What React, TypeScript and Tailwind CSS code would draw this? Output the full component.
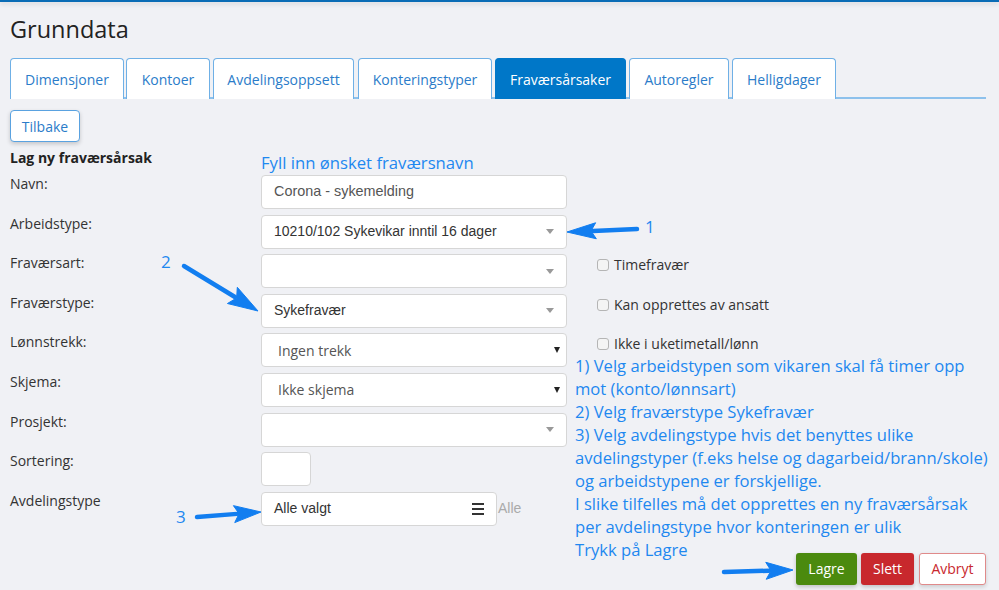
import React from "react";

const BLUE_NOTE = "#1e88f0";

type Pt = [number, number];

// Callout arrow: thick shaft with a filled triangular head
function Arrow({ from, to, head = 28, width = 17 }: { from: Pt; to: Pt; head?: number; width?: number }) {
  const dx = to[0] - from[0];
  const dy = to[1] - from[1];
  const len = Math.hypot(dx, dy);
  const ux = dx / len;
  const uy = dy / len;
  const bx = to[0] - ux * head;
  const by = to[1] - uy * head;
  const nx = -uy * (width / 2);
  const ny = ux * (width / 2);
  return (
    <g fill="#127ef0" stroke="#127ef0">
      <line x1={from[0]} y1={from[1]} x2={bx + ux * 3} y2={by + uy * 3} strokeWidth={4.5} strokeLinecap="round" />
      <polygon
        strokeWidth={1}
        strokeLinejoin="round"
        points={`${to[0]},${to[1]} ${bx + nx},${by + ny} ${bx + ux * 5},${by + uy * 5} ${bx - nx},${by - ny}`}
      />
    </g>
  );
}

const tabs = [
  { name: "Dimensjoner", w: "w-[114px]", ml: "ml-0" },
  { name: "Kontoer", w: "w-[84px]", ml: "ml-[2px]" },
  { name: "Avdelingsoppsett", w: "w-[141px]", ml: "ml-[3px]" },
  { name: "Konteringstyper", w: "w-[134px]", ml: "ml-[4px]" },
  { name: "Fraværsårsaker", w: "w-[131px]", ml: "ml-[3px]", active: true },
  { name: "Autoregler", w: "w-[100px]", ml: "ml-[3px]" },
  { name: "Helligdager", w: "w-[104px]", ml: "ml-[3px]" },
];

function Row({ label, children }: { label: string; children: React.ReactNode }) {
  return (
    <div className="flex items-start">
      <div className="w-[251px] -mt-px text-[14px] leading-[20px] text-[#333]">{label}</div>
      {children}
    </div>
  );
}

function TextBox({ value }: { value?: string }) {
  return (
    <div className="flex h-[34px] w-[306px] items-center rounded-[4px] border border-[#d6d6d6] bg-white pl-[12px] font-['Liberation_Sans',Arial,sans-serif] text-[14.4px] text-[#555]">
      {value}
    </div>
  );
}

// select2-style combo with a grey caret
function Combo({ value }: { value?: string }) {
  return (
    <div className="flex h-[34px] w-[306px] items-center justify-between rounded-[4px] border border-[#d6d6d6] bg-white pl-[12px] pr-[12px] font-['Liberation_Sans',Arial,sans-serif] text-[14px] text-[#333]">
      <span>{value}</span>
      <span className="h-0 w-0 border-x-[4px] border-t-[5px] border-x-transparent border-t-[#999]" />
    </div>
  );
}

// plain browser select
function NativeSelect({ value }: { value: string }) {
  return (
    <div className="flex h-[34px] w-[306px] items-center justify-between rounded-[4px] border border-[#d6d6d6] bg-white pl-[16px] pr-[6px] text-[14px] text-[#555]">
      <span>{value}</span>
      <span className="h-0 w-0 border-x-[3.5px] border-t-[6px] border-x-transparent border-t-[#222]" />
    </div>
  );
}

function Check({ label, last }: { label: string; last?: boolean }) {
  return (
    <div className={`flex items-center gap-[5px] pl-[22px] text-[14px] leading-[20px] text-[#333] ${last ? "h-[20px]" : "h-[39.6px] items-start"}`}>
      <span className={`h-[12px] w-[12px] rounded-[3px] border border-[#b5b5b5] bg-[#f4f4f4] ${last ? "" : "mt-[4px]"}`} />
      <span>{label}</span>
    </div>
  );
}

export default function App() {
  return (
    <div className="relative h-[590px] w-[999px] overflow-hidden bg-[#f0f1f5] font-['Open_Sans',sans-serif]">
      <div className="h-[2px] bg-[#0a6cb6] shadow-[0_2px_4px_rgba(0,0,0,0.15)]" />

      <div className="pl-[10px]">
        <h1 className="pt-[12px] text-[23.5px] leading-[30px] text-[#222]">Grunndata</h1>

        {/* tab strip */}
        <div className="mt-[14px] flex w-[976px] items-end border-b-2 border-[#8dc1ec]">
          {tabs.map((t) => (
            <div
              key={t.name}
              className={`${t.w} ${t.ml} -mb-[2px] flex h-[41px] items-center justify-center rounded-t-[4px] border border-b-0 text-[14px] ${
                t.active ? "border-[#0077c8] bg-[#0077c8] text-white" : "border-[#6fb0e6] bg-white text-[#2b7cc9]"
              }`}
            >
              {t.name}
            </div>
          ))}
        </div>

        <button className="mt-[11px] h-[32px] w-[70px] rounded-[4px] border border-[#5aa2e0] bg-white text-[14px] text-[#2b7cc9] shadow-[0_2px_4px_rgba(0,0,0,0.18)]">
          Tilbake
        </button>

        <div className="mt-[6px] flex">
          {/* form fields */}
          <div className="w-[557px] shrink-0">
            <div className="flex h-[27px]">
              <div className="w-[251px] text-[14px] font-bold leading-[20px] text-[#222]">Lag ny fraværsårsak</div>
              <div className="pt-[4px] text-[16.7px] leading-[22px] text-[#1e88f0]">Fyll inn ønsket fraværsnavn</div>
            </div>
            <div className="flex flex-col gap-[5.6px]">
              <Row label="Navn:">
                <TextBox value="Corona - sykemelding" />
              </Row>
              <Row label="Arbeidstype:">
                <Combo value="10210/102 Sykevikar inntil 16 dager" />
              </Row>
              <Row label="Fraværsart:">
                <Combo />
              </Row>
              <Row label="Fraværstype:">
                <Combo value="Sykefravær" />
              </Row>
              <Row label="Lønnstrekk:">
                <NativeSelect value="Ingen trekk" />
              </Row>
              <Row label="Skjema:">
                <NativeSelect value="Ikke skjema" />
              </Row>
              <Row label="Prosjekt:">
                <Combo />
              </Row>
              <Row label="Sortering:">
                <div className="h-[34px] w-[50px] rounded-[4px] border border-[#d6d6d6] bg-white" />
              </Row>
              <Row label="Avdelingstype">
                <div className="flex items-center">
                  <div className="flex h-[34px] w-[236px] items-center justify-between rounded-[4px] border border-[#d6d6d6] bg-white pl-[12px] pr-[12px] font-['Liberation_Sans',Arial,sans-serif] text-[14px] text-[#333]">
                    <span>Alle valgt</span>
                    <span className="flex w-[12px] flex-col gap-[3px]">
                      <span className="h-[2px] bg-[#333]" />
                      <span className="h-[2px] bg-[#333]" />
                      <span className="h-[2px] bg-[#333]" />
                    </span>
                  </div>
                  <span className="ml-[1px] font-['Liberation_Sans',Arial,sans-serif] text-[14px] text-[#aaa]">Alle</span>
                </div>
              </Row>
            </div>
          </div>

          {/* options, help notes and actions */}
          <div className="ml-[8px] w-[411px] shrink-0">
            <div className="h-[107px]" />
            <Check label="Timefravær" />
            <Check label="Kan opprettes av ansatt" />
            <Check label="Ikke i uketimetall/lønn" last />
            <div className="whitespace-nowrap text-[16.6px] leading-[23px] text-[#1e88f0]">
              1) Velg arbeidstypen som vikaren skal få timer opp
              <br />
              mot (konto/lønnsart)
              <br />
              2) Velg fraværstype Sykefravær
              <br />
              3) Velg avdelingstype hvis det benyttes ulike
              <br />
              avdelingstyper (f.eks helse og dagarbeid/brann/skole)
              <br />
              og arbeidstypene er forskjellige.
              <br />
              I slike tilfelles må det opprettes en ny fraværsårsak
              <br />
              per avdelingstype hvor konteringen er ulik
              <br />
              Trykk på Lagre
            </div>
            <div className="-mt-[8.5px] flex justify-end gap-[4px]">
              <button className="h-[32px] w-[61px] rounded-[3px] bg-[#4b8a0e] text-[14px] text-white shadow-[0_2px_4px_rgba(0,0,0,0.2)]">
                Lagre
              </button>
              <button className="h-[32px] w-[53px] rounded-[3px] bg-[#c8282d] text-[14px] text-white shadow-[0_2px_4px_rgba(0,0,0,0.2)]">
                Slett
              </button>
              <button className="ml-[1px] h-[32px] w-[67px] rounded-[3px] border border-[#e08a8a] bg-white text-[14px] text-[#c8282d] shadow-[0_2px_4px_rgba(0,0,0,0.15)]">
                Avbryt
              </button>
            </div>
          </div>
        </div>
      </div>

      {/* callout arrows over the form */}
      <svg className="pointer-events-none absolute inset-0" width={999} height={590}>
        <Arrow from={[637, 229]} to={[567, 232]} head={29} width={16} />
        <Arrow from={[184, 266]} to={[258, 311]} head={30} width={19} />
        <Arrow from={[197, 517]} to={[261, 512]} head={27} width={17} />
        <Arrow from={[724, 572]} to={[793, 570]} head={27} width={17} />
        <g fill={BLUE_NOTE} fontSize={17} fontFamily="'Open Sans', sans-serif">
          <text x={645} y={233}>1</text>
          <text x={161} y={268}>2</text>
          <text x={176} y={523}>3</text>
        </g>
      </svg>
    </div>
  );
}
